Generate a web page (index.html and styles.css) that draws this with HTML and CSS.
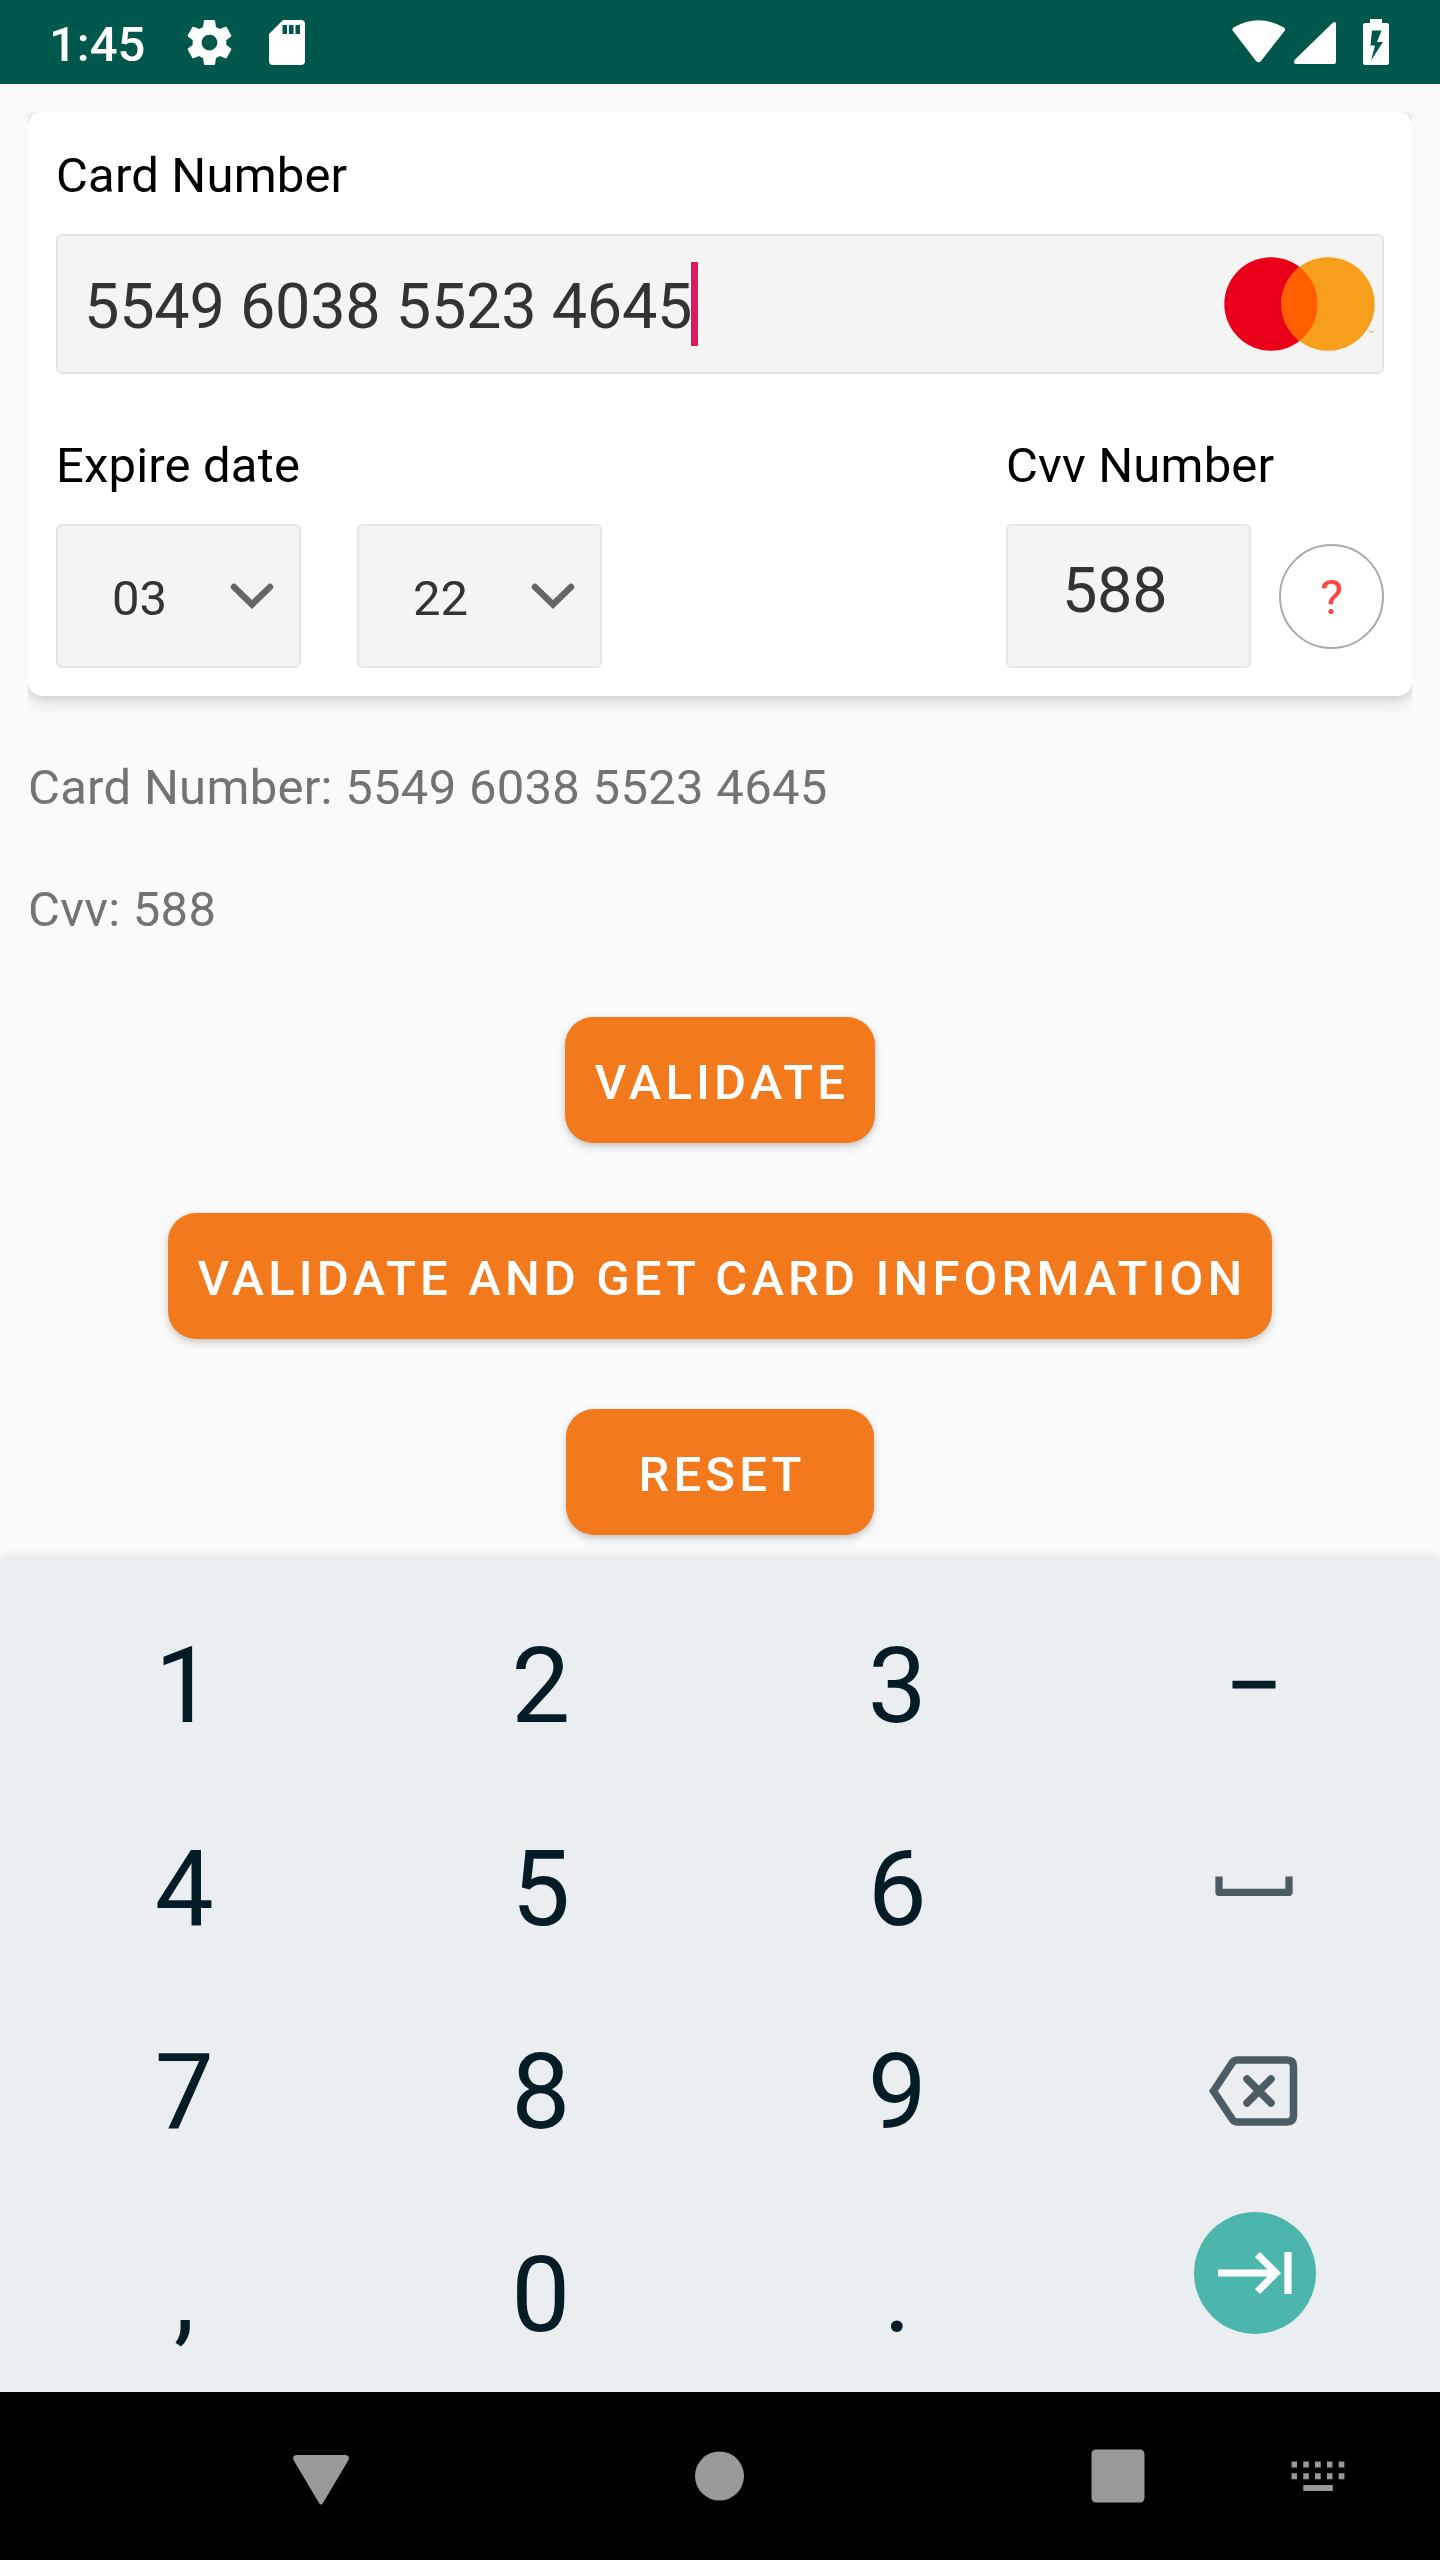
FILE: index.html
```html
<!DOCTYPE html>
<html lang="en">
<head>
<meta charset="utf-8">
<title>Card form</title>
<link rel="stylesheet" href="styles.css">
</head>
<body>
<header class="status">
  <span class="clock">1:45</span>
  <svg class="gear" viewBox="2 2 20 20" width="45" height="45"><path fill="#fff" d="M19.43 12.98c.04-.32.07-.64.07-.98s-.03-.66-.07-.98l2.11-1.65c.19-.15.24-.42.12-.64l-2-3.46c-.12-.22-.39-.3-.61-.22l-2.49 1c-.52-.4-1.08-.73-1.69-.98l-.38-2.65C14.46 2.18 14.25 2 14 2h-4c-.25 0-.46.18-.49.42l-.38 2.65c-.61.25-1.17.59-1.69.98l-2.49-1c-.23-.09-.49 0-.61.22l-2 3.46c-.13.22-.07.49.12.64l2.11 1.65c-.04.32-.07.65-.07.98s.03.66.07.98l-2.11 1.65c-.19.15-.24.42-.12.64l2 3.46c.12.22.39.3.61.22l2.49-1c.52.4 1.08.73 1.69.98l.38 2.65c.03.24.24.42.49.42h4c.25 0 .46-.18.49-.42l.38-2.65c.61-.25 1.17-.59 1.69-.98l2.49 1c.23.09.49 0 .61-.22l2-3.46c.12-.22.07-.49-.12-.64l-2.11-1.65zM12 15.5c-1.93 0-3.5-1.57-3.5-3.5s1.57-3.5 3.5-3.5 3.5 1.57 3.5 3.5-1.57 3.5-3.5 3.5z"/></svg>
  <svg class="sd" viewBox="0 0 36 45" width="36" height="45"><path fill="#fff" fill-rule="evenodd" d="M14 0H32Q36 0 36 4V41Q36 45 32 45H4Q0 45 0 41V14ZM13.500 5V14H18V5ZM20 5V14H24.500V5ZM26.500 5V14H31V5Z"/></svg>
  <svg class="system" viewBox="0 0 158 48" width="158" height="48" fill="#fff"><path d="M1 12Q-.5 10 1.500 8.500Q26.500-6 52 8.500Q54 10 52.500 12L29 42Q26.500 44.500 24 42ZM64 45Q61 45 62.500 41L101 3.500Q104 2 104 5V43Q104 45 102 45Z"/><path fill-rule="evenodd" d="M138 0H150V4H155Q157 4 157 6V44Q157 46 155 46H133Q131 46 131 44V6Q131 4 133 4H138ZM140 11.500L138.500 26.500H143L139 41.500L151 23H145L149.500 11.500Z"/></svg>
</header>

<main class="page">
  <div class="card-clip">
    <section class="card">
      <label class="label">Card Number</label>
      <div class="field number"><span>5549 6038 5523 4645</span><i class="caret"></i>
        <svg class="brand" viewBox="0 0 152 94" width="152" height="94"><circle cx="47" cy="47" r="46.700" fill="#eb001b"/><circle cx="104" cy="47" r="46.700" fill="#f79e1b"/><path fill="#ff5f00" d="M75.500 10A46.700 46.700 0 0 1 75.500 84A46.700 46.700 0 0 1 75.500 10Z"/><path stroke="#f79e1b" stroke-width=".6" d="M145 74h1.600m-.8 0v2m1.600 0v-2l.8 1 .8-1v2" fill="none"/></svg>
      </div>
      <div class="row">
        <div>
          <label class="label">Expire date</label>
          <div class="selects">
            <div class="field select"><span>03</span><svg viewBox="0 0 44 28" width="44" height="28"><path d="M4 5L22 22.500L40 5" fill="none" stroke="#666" stroke-width="6.500" stroke-linecap="round"/></svg></div>
            <div class="field select"><span>22</span><svg viewBox="0 0 44 28" width="44" height="28"><path d="M4 5L22 22.500L40 5" fill="none" stroke="#666" stroke-width="6.500" stroke-linecap="round"/></svg></div>
          </div>
        </div>
        <div>
          <label class="label">Cvv Number</label>
          <div class="cvv"><div class="field code">588</div><div class="help">?</div></div>
        </div>
      </div>
    </section>
  </div>
  <p class="result">Card Number: 5549 6038 5523 4645</p>
  <p class="result">Cvv: 588</p>
  <div class="actions">
    <button class="btn">VALIDATE</button>
    <button class="btn">VALIDATE AND GET CARD INFORMATION</button>
    <button class="btn">RESET</button>
  </div>
</main>

<section class="keyboard">
  <span class="key">1</span><span class="key">2</span><span class="key">3</span>
  <span class="key"><svg class="minus" viewBox="0 0 44 9" width="44" height="9"><path fill="#041c26" d="M.5.7H43.500V8.500H.5Z"/></svg></span>
  <span class="key">4</span><span class="key">5</span><span class="key">6</span>
  <span class="key"><svg class="space" viewBox="0 0 78 20" width="78" height="20"><path d="M4 .5V16.300H74V.5" fill="none" stroke="#4c5c64" stroke-width="7.300" stroke-linejoin="round"/></svg></span>
  <span class="key">7</span><span class="key">8</span><span class="key">9</span>
  <span class="key"><svg class="back" viewBox="0 0 90 70" width="90" height="70" fill="none" stroke="#4c5c64" stroke-width="7.500"><path d="M5.500 35L23 8.500Q25.500 4 29 4H79Q85.500 4 85.500 10.500V59.500Q85.500 66 79 66H29Q25.500 66 23 61.500Z"/><path d="M39 23L63 47M63 23L39 47" stroke-linecap="round"/></svg></span>
  <span class="key">,</span><span class="key">0</span><span class="key">.</span>
  <span class="key"><svg class="next" viewBox="0 0 122 122" width="122" height="122"><circle cx="61" cy="61" r="61" fill="#4db6ac"/><path d="M24 61H81M63.500 42.500L82 61L63.500 79.500M94 40V82" fill="none" stroke="#fff" stroke-width="7.200"/></svg></span>
</section>

<nav class="nav">
  <svg class="nav-back" viewBox="0 0 56 50" width="56" height="50"><path fill="#999" d="M3 0H53Q57 1 55.500 5L30 48Q28 51 26 48L.5 5Q-1 1 3 0Z"/></svg>
  <svg viewBox="0 0 50 50" width="50" height="50"><circle cx="24.500" cy="25" r="24.500" fill="#999"/></svg>
  <svg viewBox="0 0 54 54" width="54" height="54"><rect x=".5" y=".5" width="53" height="53" rx="4.500" fill="#999"/></svg>
  <svg viewBox="0 0 54 30" width="54" height="30" fill="#999"><path d="M.5.5h5.500v6H.5zM12.300.5h5.500v6h-5.500zM24 .5h5.700v6H24zM36 .5h5.500v6H36zM47.700.5h5.700v6h-5.700zM.5 12.200h5.500v6H.5zM12.300 12.200h5.500v6h-5.500zM24 12.200h5.700v6H24zM36 12.200h5.500v6H36zM47.700 12.200h5.700v6h-5.700zM12.300 24h29.500v6h-29.500z"/></svg>
</nav>
</body>
</html>
```
FILE: styles.css
```css
* { box-sizing: border-box; }
body {
  margin: 0;
  width: 1440px;
  height: 2560px;
  display: flex;
  flex-direction: column;
  overflow: hidden;
  background: #fafafa;
  font-family: Roboto, sans-serif;
  font-size: 49px;
  line-height: 58px;
}
svg { display: block; flex: none; }
.status {
  height: 84px;
  padding: 0 50px 0 49px;
  display: flex;
  align-items: flex-start;
  background: #00574b;
  color: #fff;
}
.clock { width: 138px; padding-top: 16px; font-weight: 500; }
.gear { margin-top: 20px; }
.sd { margin: 20px 0 0 37px; }
.system { margin: 19px 0 0 auto; }
.page { height: 1475px; padding: 28px 28px 0; }
.card-clip { clip-path: inset(0 0 -28px 0); }
.card {
  height: 584px;
  padding: 35px 28px 0;
  border-radius: 14px;
  background: #fff;
  box-shadow: 0 6px 20px rgba(0, 0, 0, .13), 0 1px 8px rgba(0, 0, 0, .12);
}
.label { display: block; color: #000; letter-spacing: .17px; }
.field {
  display: flex;
  align-items: center;
  border: 2px solid #e5e5e5;
  border-radius: 6px;
  background: #f4f4f4;
  color: #333;
}
.number {
  height: 140px;
  margin-top: 29px;
  padding: 0 6px 0 26px;
  font-size: 63px;
  letter-spacing: -.27px;
}
.number span { width: 610px; padding-top: 5px; white-space: nowrap; }
.caret { width: 7px; height: 84px; margin-left: -3px; background: #d81b60; }
.brand { margin-left: auto; }
.row { display: flex; justify-content: space-between; margin-top: 63px; }
.selects { display: flex; gap: 56px; margin-top: 29px; }
.select {
  width: 245px;
  height: 144px;
  justify-content: space-between;
  padding: 5px 25px 0 54px;
}
.select svg { margin-top: -6px; }
.cvv { display: flex; align-items: center; gap: 28px; margin-top: 29px; }
.code {
  width: 245px;
  height: 144px;
  padding: 0 0 11px 54px;
  font-size: 63px;
  letter-spacing: -.32px;
}
.help {
  width: 105px;
  height: 105px;
  display: flex;
  align-items: center;
  justify-content: center;
  padding-top: 4px;
  border: 2px solid #aaa;
  border-radius: 50%;
  color: #f44;
}
.result { margin: 63px 0 0; color: #737373; letter-spacing: .28px; }
.result + .result { margin-top: 64px; }
.actions {
  display: flex;
  flex-direction: column;
  align-items: center;
  gap: 70px;
  margin-top: 78px;
}
.btn {
  height: 126px;
  min-width: 308px;
  padding: 6px 26px 0 30px;
  border: 0;
  border-radius: 28px;
  background: #f27a1c;
  color: #fff;
  font: 500 49px/58px Roboto, sans-serif;
  letter-spacing: 4.15px;
  box-shadow: 0 4px 8px rgba(0, 0, 0, .17), 0 1px 4px rgba(0, 0, 0, .08);
}
.keyboard {
  height: 833px;
  padding: 24px 8px 0 6px;
  display: grid;
  grid-template: repeat(4, 203px) / repeat(4, 1fr);
  overflow: hidden;
  background: #eaeef1;
  box-shadow: 0 0 14px rgba(0, 0, 0, .13);
  clip-path: inset(-14px 0 0 0);
  color: #041c26;
  font-size: 105px;
  line-height: 203px;
}
.key { display: flex; align-items: center; justify-content: center; padding-top: 3px; }
.minus, .back { margin-top: -3px; }
.space { margin: -7px 0 0 1px; }
.back { margin-right: 1px; }
.next { margin: -45px 0 0 2px; }
.nav {
  height: 168px;
  padding: 0 95px 1px 293px;
  display: flex;
  align-items: center;
  gap: 346px;
  background: #000;
}
.nav-back { margin-top: 8px; }
.nav svg:last-child { margin-left: -200px; }
```
